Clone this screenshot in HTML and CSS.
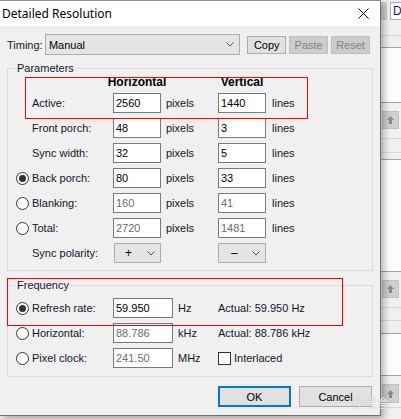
FILE: index.html
```html
<!DOCTYPE html>
<html>
<head>
<meta charset="utf-8">
<link rel="stylesheet" href="styles.css">
</head>
<body>
<div class="dialog">
  <div class="titlebar">
    <span class="title">Detailed Resolution</span>
    <svg class="close" width="11" height="11" viewBox="0 0 11 11"><path d="M0.5 0.5 L10.5 10.5 M10.5 0.5 L0.5 10.5" stroke="#000" stroke-width="1" fill="none"/></svg>
  </div>
  <div class="content">
    <div class="timing-row">
      <span class="timing-label">Timing:</span>
      <div class="combo combo-wide"><span>Manual</span><svg width="8" height="5" viewBox="0 0 8 5"><path d="M0.5 0.5 L4 4 L7.5 0.5" fill="none" stroke="#555"/></svg></div>
      <button class="btn">Copy</button>
      <button class="btn disabled">Paste</button>
      <button class="btn disabled">Reset</button>
    </div>

    <fieldset class="group group-params">
      <legend>Parameters</legend>
      <div class="param-grid">
        <span></span><span></span><span class="head">Horizontal</span><span></span><span class="head">Vertical</span><span></span>

        <span></span><span class="lbl">Active:</span><span class="field">2560</span><span class="unit">pixels</span><span class="field">1440</span><span class="unit unit-v">lines</span>

        <span></span><span class="lbl">Front porch:</span><span class="field">48</span><span class="unit">pixels</span><span class="field">3</span><span class="unit unit-v">lines</span>

        <span></span><span class="lbl">Sync width:</span><span class="field">32</span><span class="unit">pixels</span><span class="field">5</span><span class="unit unit-v">lines</span>

        <span class="radio on"></span><span class="lbl">Back porch:</span><span class="field">80</span><span class="unit">pixels</span><span class="field">33</span><span class="unit unit-v">lines</span>

        <span class="radio"></span><span class="lbl">Blanking:</span><span class="field dis">160</span><span class="unit">pixels</span><span class="field dis">41</span><span class="unit unit-v">lines</span>

        <span class="radio"></span><span class="lbl">Total:</span><span class="field dis">2720</span><span class="unit">pixels</span><span class="field dis">1481</span><span class="unit unit-v">lines</span>

        <span></span><span class="lbl">Sync polarity:</span>
        <div class="combo combo-sm combo-h"><span>+</span><svg width="8" height="5" viewBox="0 0 8 5"><path d="M0.5 0.5 L4 4 L7.5 0.5" fill="none" stroke="#555"/></svg></div>
        <span></span>
        <div class="combo combo-sm combo-v"><span>–</span><svg width="8" height="5" viewBox="0 0 8 5"><path d="M0.5 0.5 L4 4 L7.5 0.5" fill="none" stroke="#555"/></svg></div>
        <span></span>
      </div>
    </fieldset>

    <fieldset class="group group-freq">
      <legend>Frequency</legend>
      <div class="freq-grid">
        <span class="radio on"></span><span class="lbl">Refresh rate:</span><span class="field">59.950</span><span class="unit">Hz</span><span class="actual">Actual: 59.950 Hz</span>

        <span class="radio"></span><span class="lbl">Horizontal:</span><span class="field dis">88.786</span><span class="unit">kHz</span><span class="actual">Actual: 88.786 kHz</span>

        <span class="radio"></span><span class="lbl">Pixel clock:</span><span class="field dis">241.50</span><span class="unit">MHz</span><span class="check-wrap"><span class="checkbox"></span><span>Interlaced</span></span>
      </div>
    </fieldset>

    <div class="actions">
      <button class="btn-lg btn-ok">OK</button>
      <button class="btn-lg">Cancel</button>
    </div>
  </div>
</div>

<div class="backdrop">
  <div class="bd-toolbar">
    <div class="bd-btns"><span class="bd-chip"></span><span class="bd-dbtn">D</span></div>
    <div class="bd-line-light bd-tb-line"></div>
  </div>
  <div class="bd-line-dark"></div>
  <div class="bd-white bd-h54"></div>
  <div class="bd-line-dark"></div>
  <div class="bd-grey bd-h35"><span class="bd-arrow"><svg width="9" height="10" viewBox="0 0 9 10"><path d="M4.5 1 L8 5 H6 V9 H3 V5 H1 Z" fill="#8c8c8c"/></svg></span></div>
  <div class="bd-line-light"></div>
  <div class="bd-grey bd-h13"></div>
  <div class="bd-line-light"></div>
  <div class="bd-grey bd-h6"></div>
  <div class="bd-line-dark"></div>
  <div class="bd-white bd-h111"></div>
  <div class="bd-line-dark"></div>
  <div class="bd-grey bd-h35"><span class="bd-arrow"><svg width="9" height="10" viewBox="0 0 9 10"><path d="M4.5 1 L8 5 H6 V9 H3 V5 H1 Z" fill="#8c8c8c"/></svg></span></div>
  <div class="bd-line-light"></div>
  <div class="bd-grey bd-h12"></div>
  <div class="bd-line-light"></div>
  <div class="bd-grey bd-h12"></div>
  <div class="bd-line-dark"></div>
  <div class="bd-white bd-h41"></div>
  <div class="bd-line-dark"></div>
  <div class="bd-grey bd-h31"><span class="bd-arrow bd-arrow-tall"><svg width="9" height="10" viewBox="0 0 9 10"><path d="M4.5 1 L8 5 H6 V9 H3 V5 H1 Z" fill="#8c8c8c"/></svg></span></div>
  <div class="bd-line-light"></div>
  <div class="bd-grey bd-rest"></div>
</div>

<div class="mark mark-active"></div>
<div class="mark mark-freq"></div>
<div class="watermark">小黑盒</div>
</body>
</html>
```

FILE: styles.css
```css
* { box-sizing: border-box; }

html, body { margin: 0; padding: 0; }

body {
  position: relative;
  width: 401px;
  height: 419px;
  overflow: hidden;
  display: flex;
  align-items: flex-start;
  background: #f0f0f0;
  font-family: "Liberation Sans", Arial, sans-serif;
  font-size: 11px;
  color: #14142b;
}

/* ---------- dialog ---------- */
.dialog {
  position: relative;
  z-index: 2;
  flex: none;
  width: 381px;
  height: 416px;
  background: #f0f0f0;
  border: 1px solid #6f6f6f;
  border-left: none;
  border-top-color: #8f8f8f;
  box-shadow: 3px 3px 7px rgba(0, 0, 0, 0.3);
  display: flex;
  flex-direction: column;
}

.titlebar {
  height: 25px;
  background: #fff;
  display: flex;
  align-items: center;
  justify-content: space-between;
  padding: 0 11px 0 2px;
}

.title {
  font-family: "Noto Sans", "Open Sans", sans-serif;
  font-size: 12px;
  color: #000;
}

.content {
  padding: 0 7px;
}

.timing-row {
  display: flex;
  align-items: center;
  height: 21px;
  margin-top: 8px;
}

.timing-label { width: 38px; }

.combo {
  display: flex;
  align-items: center;
  justify-content: space-between;
  height: 20px;
  background: #e5e5e5;
  border: 1px solid #adadad;
  color: #000;
}

.combo-wide {
  width: 196px;
  height: 21px;
  padding: 0 5px 0 3px;
  margin-right: 7px;
}

.btn {
  font: inherit;
  color: #000;
  width: 39px;
  height: 18px;
  padding: 0;
  background: #e1e1e1;
  border: 1px solid #adadad;
  margin: 0 3px 0 0;
}

.btn.disabled {
  background: #cccccc;
  border-color: #bfbfbf;
  color: #838383;
}

/* ---------- group boxes ---------- */
.group {
  margin: 6px 0 0;
  padding: 0 0 7px 8px;
  border: 1px solid #dcdcdc;
  min-width: 0;
}

.group legend {
  padding: 0 2px;
  margin-left: -1px;
  line-height: 14px;
  font-size: 11px;
}

.group-freq {
  margin-top: 7px;
  padding-top: 6px;
  padding-bottom: 8px;
}

.param-grid {
  display: grid;
  grid-template-columns: 16px 81px 48px 57px 48px 1fr;
  grid-template-rows: 13px repeat(7, 20px);
  row-gap: 5px;
  align-items: center;
}

.freq-grid {
  display: grid;
  grid-template-columns: 16px 81px 60px 45px 1fr;
  grid-auto-rows: 20px;
  row-gap: 5px;
  align-items: center;
}

.head {
  font-weight: bold;
  font-size: 12px;
  text-align: center;
  margin: 0 -12px;
  white-space: nowrap;
  color: #000;
}

.field {
  height: 20px;
  border: 1px solid #7a7a7a;
  background: #fff;
  padding-left: 2px;
  line-height: 18px;
  color: #000;
  white-space: nowrap;
}

.field.dis { color: #6d6d6d; }

.unit { padding-left: 5px; white-space: nowrap; }
.unit-v { padding-left: 6px; }

.radio {
  width: 13px;
  height: 13px;
  border-radius: 50%;
  border: 1px solid #333;
  background: #fff;
  display: flex;
  align-items: center;
  justify-content: center;
}

.radio.on::after {
  content: "";
  width: 7px;
  height: 7px;
  border-radius: 50%;
  background: #333;
}

.combo-sm {
  font-size: 12px;
  padding-right: 5px;
}

.combo-h {
  width: 47px;
  margin-left: 1px;
  padding-left: 10px;
}

.combo-v {
  width: 48px;
  padding-left: 12px;
}

.actual { white-space: nowrap; }

.check-wrap {
  display: flex;
  align-items: center;
  gap: 3px;
}

.checkbox {
  width: 13px;
  height: 13px;
  border: 1px solid #333;
  background: #fff;
}

/* ---------- action buttons ---------- */
.actions {
  display: flex;
  justify-content: flex-end;
  gap: 8px;
  margin-top: 9px;
  padding-right: 1px;
}

.btn-lg {
  font: inherit;
  color: #000;
  width: 73px;
  height: 21px;
  padding: 0;
  background: #e1e1e1;
  border: 1px solid #adadad;
}

.btn-ok { border: 2px solid #0078d7; }

/* ---------- window behind ---------- */
.backdrop {
  flex: 1;
  height: 419px;
  display: flex;
  flex-direction: column;
  background: #f0f0f0;
  overflow: hidden;
}

.bd-toolbar {
  height: 47px;
  background: #f0f0f0;
}

.bd-btns {
  display: flex;
  gap: 3px;
  padding-top: 2px;
  height: 22px;
}

.bd-chip {
  width: 6px;
  height: 18px;
  background: #d0d0d0;
  flex: none;
}

.bd-dbtn {
  flex: none;
  width: 14px;
  height: 18px;
  background: #fbfbfb;
  border: 1px solid #adadad;
  padding-left: 2px;
  line-height: 16px;
  font-size: 12px;
  color: #1a1a60;
}

.bd-tb-line { margin-top: 13px; }

.bd-line-dark { height: 1px; background: #a3a3a3; flex: none; }
.bd-line-light { height: 1px; background: #d6d6d6; flex: none; }
.bd-white { background: #fdfdfd; flex: none; }
.bd-grey { background: #f0f0f0; flex: none; }

.bd-h54 { height: 54px; }
.bd-h35 { height: 35px; }
.bd-h13 { height: 13px; }
.bd-h12 { height: 12px; }
.bd-h6 { height: 6px; }
.bd-h111 { height: 111px; }
.bd-h41 { height: 41px; }
.bd-h31 { height: 31px; }
.bd-rest { flex: 1; }

.bd-arrow {
  display: flex;
  align-items: center;
  justify-content: center;
  width: 17px;
  height: 18px;
  margin: 8px 0 0 1px;
  background: #cfcfcf;
  border: 1px solid #c2c2c2;
}

.bd-arrow-tall { height: 19px; }

/* ---------- overlays ---------- */
.mark {
  position: absolute;
  z-index: 4;
  border: 1px solid #ff0000;
}

.mark-active { left: 25px; top: 77px; width: 283px; height: 42px; }
.mark-freq { left: 7px; top: 278px; width: 336px; height: 48px; }

.watermark {
  position: absolute;
  z-index: 5;
  left: 353px;
  top: 394px;
  font-family: "Noto Sans CJK SC", sans-serif;
  font-size: 12px;
  color: rgba(255, 255, 255, 0.85);
  text-shadow: 0 0 1px rgba(0, 0, 0, 0.3);
}
```
